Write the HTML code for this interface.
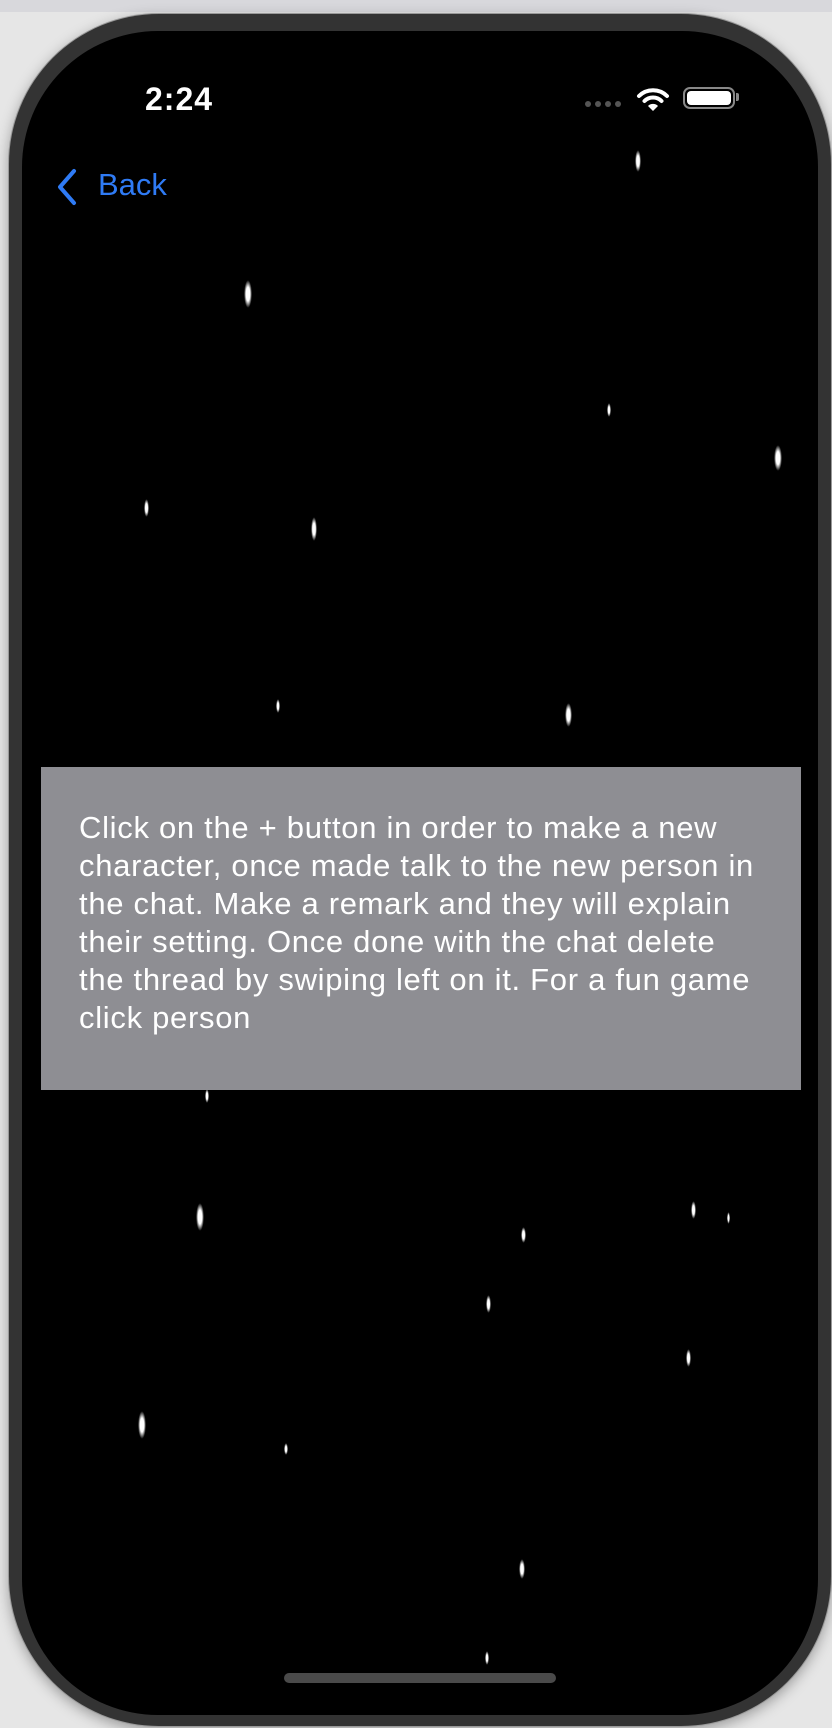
<!DOCTYPE html>
<html><head><meta charset="utf-8"><style>
html,body{margin:0;padding:0}
body{width:832px;height:1728px;background:#e6e6e6;position:relative;overflow:hidden;font-family:"Liberation Sans",sans-serif}
.topbar{position:absolute;left:0;top:0;width:832px;height:12px;background:#d8d8dc}
.frame{position:absolute;left:9px;top:14px;width:822px;height:1712px;background:#333;border-radius:150px;box-shadow:0 0 0 1px #999, 0 4px 14px rgba(0,0,0,.35)}
.screen{position:absolute;left:22px;top:31px;width:796px;height:1684px;background:#000;border-radius:136px;overflow:hidden}
.abs{position:absolute}
.time{left:123px;top:50px;color:#fff;font-weight:bold;font-size:32px;letter-spacing:1px}
.back{left:76px;top:136px;color:#2f7bf5;font-size:31px}
.box{left:19px;top:736px;width:760px;height:323px;background:#8e8e93}
.txt{left:57px;top:778px;color:#fff;font-size:31px;letter-spacing:0.7px;line-height:38px;white-space:nowrap}
.dot{position:absolute;background:radial-gradient(ellipse at center,#fff 35%,rgba(255,255,255,0) 70%);border-radius:50%}
.home{left:262px;top:1642px;width:272px;height:10px;border-radius:5px;background:#4a4a4a}
.sd{position:absolute;top:70px;width:6px;height:6px;border-radius:3px;background:#555}
</style></head><body>
<div class="topbar"></div>
<div class="frame"></div>
<div class="screen">
<div class="abs time">2:24</div>
<div class="sd" style="left:563px"></div><div class="sd" style="left:573px"></div><div class="sd" style="left:583px"></div><div class="sd" style="left:593px"></div>
<svg class="abs" style="left:614px;top:56px" width="34" height="24" viewBox="0 0 34 24">
<path d="M3 9 A20 20 0 0 1 31 9" stroke="#fff" stroke-width="4" fill="none" stroke-linecap="round"/>
<path d="M8.5 14 A12 12 0 0 1 25.5 14" stroke="#fff" stroke-width="4" fill="none" stroke-linecap="round"/>
<path d="M12 19 L17 24 L22 19 A7 7 0 0 0 12 19 Z" fill="#fff"/>
</svg>
<div class="abs" style="left:661px;top:56px;width:48px;height:18px;border:2px solid #888;border-radius:7px"></div>
<div class="abs" style="left:665px;top:60px;width:44px;height:14px;background:#fff;border-radius:4px"></div>
<div class="abs" style="left:714px;top:62px;width:3px;height:8px;background:#888;border-radius:0 2px 2px 0"></div>
<svg class="abs" style="left:33px;top:137px" width="24" height="38" viewBox="0 0 24 38"><path d="M19 3 L5 19 L19 35" stroke="#2f7bf5" stroke-width="4" fill="none" stroke-linecap="round" stroke-linejoin="round"/></svg>
<div class="abs back">Back</div>

<div class="dot" style="left:613px;top:119px;width:6px;height:22px"></div>
<div class="dot" style="left:222px;top:249px;width:8px;height:28px"></div>
<div class="dot" style="left:585px;top:372px;width:4px;height:14px"></div>
<div class="dot" style="left:752px;top:414px;width:8px;height:26px"></div>
<div class="dot" style="left:122px;top:468px;width:5px;height:18px"></div>
<div class="dot" style="left:289px;top:486px;width:6px;height:24px"></div>
<div class="dot" style="left:254px;top:668px;width:4px;height:14px"></div>
<div class="dot" style="left:543px;top:672px;width:7px;height:24px"></div>
<div class="dot" style="left:183px;top:1058px;width:4px;height:14px"></div>
<div class="dot" style="left:174px;top:1172px;width:8px;height:28px"></div>
<div class="dot" style="left:669px;top:1170px;width:5px;height:18px"></div>
<div class="dot" style="left:705px;top:1181px;width:3px;height:12px"></div>
<div class="dot" style="left:499px;top:1196px;width:5px;height:16px"></div>
<div class="dot" style="left:464px;top:1264px;width:5px;height:18px"></div>
<div class="dot" style="left:664px;top:1318px;width:5px;height:18px"></div>
<div class="dot" style="left:116px;top:1380px;width:8px;height:28px"></div>
<div class="dot" style="left:262px;top:1412px;width:4px;height:12px"></div>
<div class="dot" style="left:497px;top:1528px;width:6px;height:20px"></div>
<div class="dot" style="left:463px;top:1620px;width:4px;height:14px"></div>

<div class="abs box"></div>
<div class="abs txt">Click on the + button in order to make a new<br>character, once made talk to the new person in<br>the chat. Make a remark and they will explain<br>their setting. Once done with the chat delete<br>the thread by swiping left on it. For a fun game<br>click person</div>
<div class="abs home"></div>
</div>
</body></html>
